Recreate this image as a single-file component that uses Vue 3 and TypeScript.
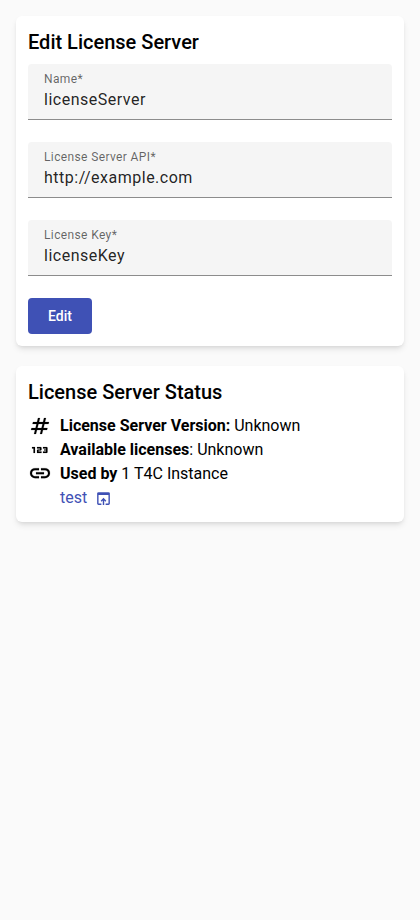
<script setup lang="ts">
import { reactive } from 'vue'

interface Field {
  id: 'name' | 'url' | 'key'
  label: string
}

const fields: Field[] = [
  { id: 'name', label: 'Name' },
  { id: 'url', label: 'License Server API' },
  { id: 'key', label: 'License Key' },
]

const form = reactive<Record<Field['id'], string>>({
  name: 'licenseServer',
  url: 'http://example.com',
  key: 'licenseKey',
})

const instances: string[] = ['test']
</script>

<template>
  <main class="page">
    <form class="card" @submit.prevent>
      <h2 class="title">Edit License Server</h2>
      <div class="fields">
        <label v-for="field in fields" :key="field.id" class="field">
          <span class="field-label">{{ field.label }}*</span>
          <input v-model="form[field.id]" class="field-input" type="text" spellcheck="false" />
        </label>
      </div>
      <button class="button" type="submit">Edit</button>
    </form>

    <section class="card">
      <h2 class="title">License Server Status</h2>
      <div class="row">
        <svg class="icon" viewBox="0 -960 960 960">
          <path d="m240-160 40-160H120l20-80h160l40-160H180l20-80h160l40-160h80l-40 160h160l40-160h80l-40 160h160l-20 80H660l-40 160h160l-20 80H600l-40 160h-80l40-160H360l-40 160h-80Zm140-240h160l40-160H420l-40 160Z" />
        </svg>
        <span><b>License Server Version:</b> Unknown</span>
      </div>
      <div class="row">
        <svg class="icon" viewBox="0 -960 960 960">
          <path d="M220-360v-180h-60v-60h120v240h-60Zm140 0v-100q0-17 11.5-28.5T400-500h80v-40H360v-60h140q17 0 28.5 11.5T540-560v60q0 17-11.5 28.5T500-460h-80v40h120v60H360Zm240 0v-60h120v-40h-80v-40h80v-40H600v-60h140q17 0 28.5 11.5T780-560v160q0 17-11.5 28.5T740-360H600Z" />
        </svg>
        <span><b>Available licenses</b>: Unknown</span>
      </div>
      <div class="row">
        <svg class="icon" viewBox="0 -925 960 960">
          <path d="M440-280H280q-83 0-141.5-58.5T80-480q0-83 58.5-141.5T280-680h160v80H280q-50 0-85 35t-35 85q0 50 35 85t85 35h160v80ZM320-440v-80h320v80H320Zm200 160v-80h160q50 0 85-35t35-85q0-50-35-85t-85-35H520v-80h160q83 0 141.5 58.5T880-480q0 83-58.5 141.5T680-280H520Z" />
        </svg>
        <span><b>Used by</b> {{ instances.length }} T4C Instance</span>
      </div>
      <a v-for="instance in instances" :key="instance" class="row link" href="#">
        <span>{{ instance }}</span>
        <svg class="icon small" viewBox="0 -960 960 960">
          <path d="M200-120q-33 0-56.5-23.5T120-200v-560q0-33 23.5-56.5T200-840h560q33 0 56.5 23.5T840-760v560q0 33-23.5 56.5T760-120H600v-80h160v-480H200v480h160v80H200Zm240 0v-246l-64 64-56-56 160-160 160 160-56 56-64-64v246h-80Z" />
        </svg>
      </a>
    </section>
  </main>
</template>

<style>
body {
  background: #fafafa;
}
</style>

<style scoped>
.page {
  display: flex;
  flex-direction: column;
  gap: 20px;
  padding: 16px;
  font: 400 16px/24px Roboto, sans-serif;
  color: #000;
}

.card {
  padding: 12px;
  border-radius: 6px;
  background: #fff;
  box-shadow: 0 4px 6px -1px rgba(0, 0, 0, 0.1), 0 2px 4px -2px rgba(0, 0, 0, 0.1);
}

.title {
  margin: 0 0 8px;
  font-size: 20px;
  line-height: 28px;
  font-weight: 500;
}

.fields {
  display: grid;
  gap: 22px;
  margin-bottom: 22px;
}

.field {
  display: flex;
  flex-direction: column;
  box-sizing: border-box;
  height: 56px;
  padding: 6px 16px 0;
  border-radius: 4px 4px 0 0;
  background: linear-gradient(#8c8c8c, #8c8c8c) bottom / 100% 1px no-repeat #f5f5f5;
}

.field-label {
  font-size: 12px;
  line-height: 18px;
  letter-spacing: 0.375px;
  color: rgba(0, 0, 0, 0.6);
}

.field-input {
  width: 100%;
  height: 24px;
  padding: 0;
  border: 0;
  outline: 0;
  background: none;
  font: inherit;
  letter-spacing: 0.5px;
  color: rgba(0, 0, 0, 0.87);
}

.button {
  display: block;
  width: 64px;
  height: 36px;
  padding: 0;
  border: 0;
  border-radius: 4px;
  background: #3f51b5;
  color: #fff;
  font: 500 14px/36px Roboto, sans-serif;
}

.row {
  display: flex;
  align-items: center;
  gap: 8px;
  height: 24px;
}

.link {
  gap: 7.5px;
  width: fit-content;
  margin-left: 32px;
  color: #3f51b5;
  text-decoration: none;
}

.icon {
  flex: none;
  width: 24px;
  height: 24px;
  fill: currentColor;
  stroke: currentColor;
  stroke-width: 6px;
}

.small {
  width: 17px;
  height: 17px;
  stroke: none;
}
</style>
